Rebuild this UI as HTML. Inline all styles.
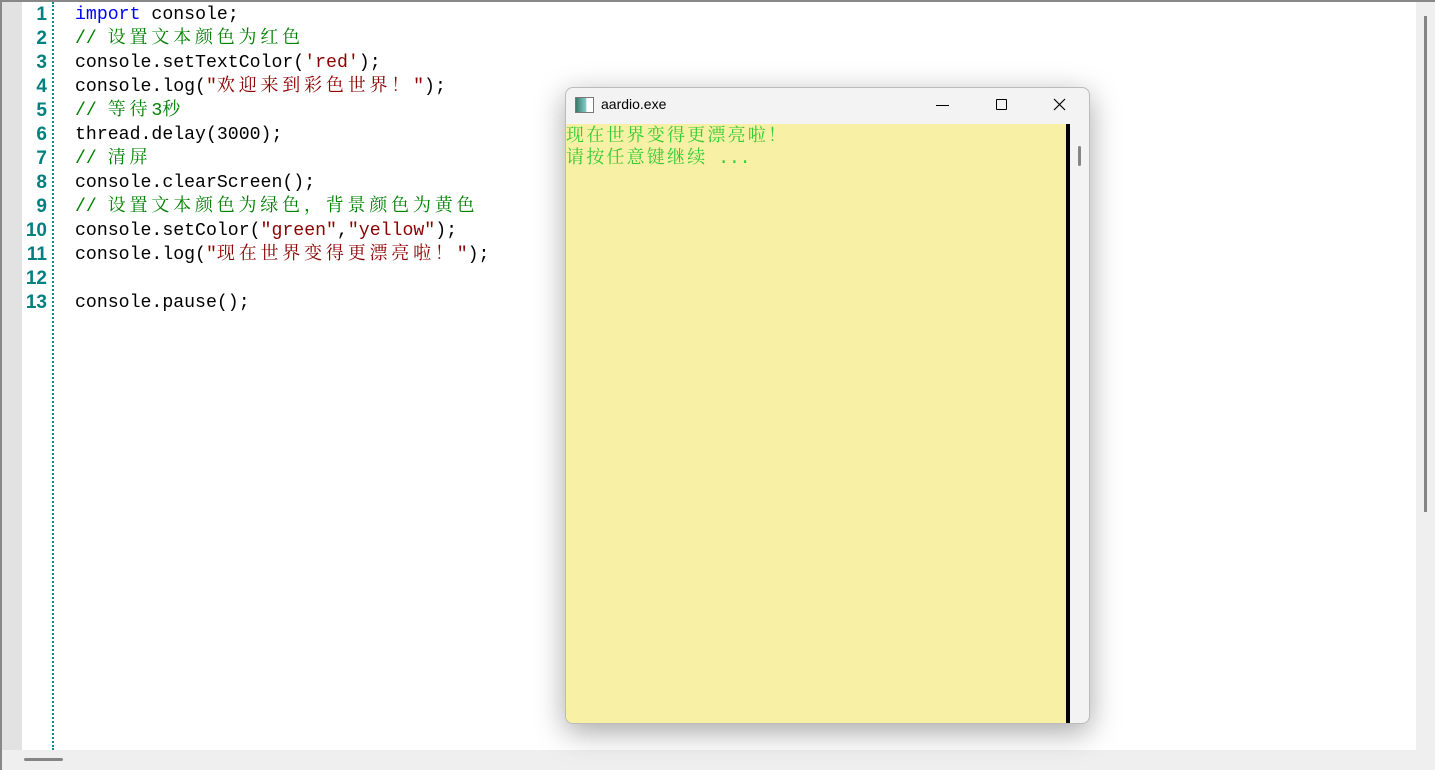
<!DOCTYPE html>
<html><head><meta charset="utf-8"><style>
body{margin:0;width:1435px;height:770px;overflow:hidden;background:#fff;position:relative;font-family:"Liberation Mono","Noto Sans CJK SC",monospace}
.abs{position:absolute}
.code div{height:24px;line-height:24px;white-space:pre;font-size:18.2px;color:#000}
.num div{height:24px;line-height:24px;font-size:19px;color:#008080;text-align:right;font-family:"Liberation Sans",sans-serif;font-weight:bold}
.code .k{color:#0000ff}.code .c{color:#008000}.code .s{color:#8b0000}
.z{font-family:"Noto Serif CJK SC",serif;font-size:18px;letter-spacing:3.8px;line-height:0}
.g{font-family:'Noto Serif CJK SC',serif;letter-spacing:2.2px;line-height:0}
</style></head><body>
<div class="abs" style="left:0;top:0;width:1435px;height:2px;background:#888"></div>
<div class="abs" style="left:0;top:0;width:2px;height:770px;background:#888"></div>
<div class="abs" style="left:2px;top:2px;width:20px;height:748px;background:#e2e2e2"></div>
<div class="abs" style="left:52px;top:2px;width:0;height:748px;border-left:2px dotted #009090"></div>
<div class="abs num" style="left:22px;top:3px;width:25px">
<div>1</div><div>2</div><div>3</div><div>4</div><div>5</div><div>6</div><div>7</div><div>8</div><div>9</div><div>10</div><div>11</div><div>12</div><div>13</div></div>
<div class="abs code" style="left:75px;top:3px">
<div><span class="k">import</span> console;</div>
<div class="c">// <span class="z">设置文本颜色为红色</span></div>
<div>console.setTextColor(<span class="s">'red'</span>);</div>
<div>console.log(<span class="s">"<span class="z">欢迎来到彩色世界！</span>"</span>);</div>
<div class="c">// <span class="z">等待</span>3<span class="z">秒</span></div>
<div>thread.delay(3000);</div>
<div class="c">// <span class="z">清屏</span></div>
<div>console.clearScreen();</div>
<div class="c">// <span class="z">设置文本颜色为绿色，背景颜色为黄色</span></div>
<div>console.setColor(<span class="s">"green"</span>,<span class="s">"yellow"</span>);</div>
<div>console.log(<span class="s">"<span class="z">现在世界变得更漂亮啦！</span>"</span>);</div>
<div></div>
<div>console.pause();</div>
</div>
<div class="abs" style="left:1416px;top:2px;width:19px;height:768px;background:#efefef"></div>
<div class="abs" style="left:1424px;top:16px;width:3px;height:496px;background:#858585"></div>
<div class="abs" style="left:2px;top:750px;width:1433px;height:20px;background:#efefef"></div>
<div class="abs" style="left:24px;top:758px;width:39px;height:3px;background:#858585;border-radius:2px"></div>
<div class="abs" style="left:565px;top:87px;width:525px;height:637px;border-radius:8px;background:#f3f3f3;box-shadow:0 8px 30px rgba(0,0,0,.35);border:1px solid #bbb;box-sizing:border-box;overflow:hidden">
<div class="abs" style="left:9px;top:9px;width:17px;height:14px;border:1px solid #777;background:linear-gradient(90deg,#3a7a6a 0,#8cc 60%,#fff 61%)"></div>
<div class="abs" style="left:35px;top:8px;font:14px 'Liberation Sans',sans-serif;color:#000">aardio.exe</div>
<div class="abs" style="left:370px;top:17px;width:13px;height:1px;background:#000"></div>
<div class="abs" style="left:430px;top:11px;width:9px;height:9px;border:1px solid #000;border-radius:1px"></div>
<svg class="abs" style="left:487px;top:10px" width="13" height="13"><path d="M1 1L12 12M12 1L1 12" stroke="#000" stroke-width="1.2"/></svg>
<div class="abs" style="left:0;top:36px;width:500px;height:599px;padding-top:2px;background:#f8f0a4;font:18px 'Liberation Mono','Noto Serif CJK SC',serif;color:#33cc33;line-height:22px;white-space:pre"><span class="g">现在世界变得更漂亮啦！</span>
<span class="g">请按任意键继续</span> ...</div>
<div class="abs" style="left:500px;top:36px;width:4px;height:601px;background:#000"></div>
<div class="abs" style="left:512px;top:58px;width:3px;height:20px;background:#858585;border-radius:2px"></div>
</div>
</body></html>
